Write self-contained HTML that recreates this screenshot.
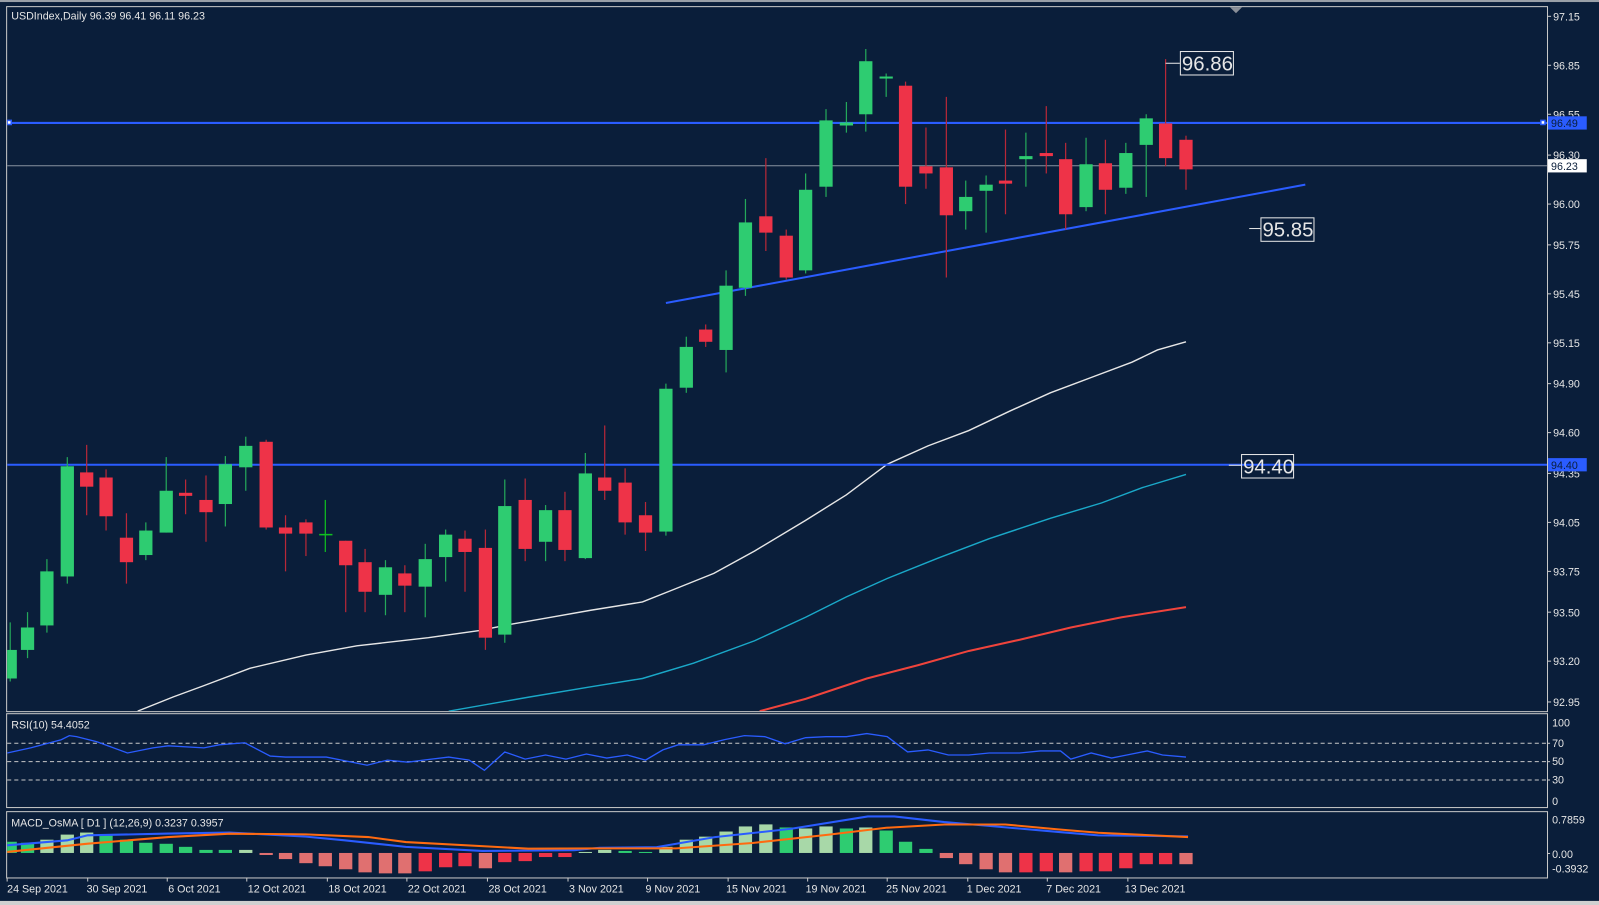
<!DOCTYPE html>
<html><head><meta charset="utf-8"><style>
html,body{margin:0;padding:0;background:#0a1e3a;overflow:hidden}
svg{display:block}
text{font-family:"Liberation Sans",sans-serif;fill:#e6e6e6}
</style></head><body>
<svg width="1599" height="905" viewBox="0 0 1568 887" preserveAspectRatio="none" xmlns="http://www.w3.org/2000/svg">
<defs>
<clipPath id="cm"><rect x="7" y="7" width="1510" height="690"/></clipPath>
<clipPath id="cr"><rect x="7" y="700" width="1510" height="91"/></clipPath>
<clipPath id="cd"><rect x="7" y="796" width="1510" height="64"/></clipPath>
</defs>
<rect x="0" y="0" width="1568" height="887" fill="#0a1e3a"/>
<rect x="0" y="883" width="1568" height="4" fill="#d0d0d0"/>
<rect x="0" y="0" width="1568" height="2" fill="#9aa0a8"/>
<rect x="6.5" y="6.5" width="1511" height="691" fill="none" stroke="#c8c8c8" stroke-width="1"/>
<rect x="6.5" y="699.5" width="1511" height="92" fill="none" stroke="#c8c8c8" stroke-width="1"/>
<rect x="6.5" y="795.5" width="1511" height="65" fill="none" stroke="#c8c8c8" stroke-width="1"/>
<polygon points="1206,7 1218,7 1212,13" fill="#8a8f98"/>

<g clip-path="url(#cm)">
<line x1="7" y1="162.5" x2="1517" y2="162.5" stroke="#8892a0" stroke-width="1"/>
<polyline fill="none" stroke="#e6e6e6" stroke-width="1.4" points="135,697 170,683 200,672 245,655 300,642 350,633 420,625 470,618 500,612 540,605 580,598 630,590 660,578 700,562 740,540 790,510 830,485 870,455 910,437 950,422 990,403 1030,385 1070,370 1110,355 1135,343 1163,335"/>
<polyline fill="none" stroke="#1aa8c8" stroke-width="1.4" points="440,697 520,683 580,673 630,665 680,650 740,628 790,605 830,585 870,567 920,547 970,528 1030,508 1080,493 1120,478 1163,465"/>
<polyline fill="none" stroke="#f0443c" stroke-width="2" points="745,697 790,685 850,665 900,652 950,638 1000,627 1050,615 1100,605 1163,595"/>
<line x1="7" y1="120.5" x2="1517" y2="120.5" stroke="#2a5cff" stroke-width="2"/>
<line x1="7" y1="455.5" x2="1517" y2="455.5" stroke="#2a5cff" stroke-width="2"/>
<rect x="7" y="118" width="4" height="4" fill="#fff" stroke="#2a5cff" stroke-width="1.5"/>
<rect x="1511" y="118" width="4" height="4" fill="#fff" stroke="#2a5cff" stroke-width="1.5"/>
<line x1="653" y1="297" x2="1280" y2="181" stroke="#2a5cff" stroke-width="2"/>
<g>
<g stroke="#24a85a" stroke-width="1.2">
<line x1="10" y1="610" x2="10" y2="668"/><line x1="27" y1="600" x2="27" y2="645"/><line x1="46" y1="548" x2="46" y2="620"/><line x1="66" y1="448" x2="66" y2="572"/><line x1="143" y1="512" x2="143" y2="549"/><line x1="163" y1="448" x2="163" y2="522"/><line x1="221" y1="447" x2="221" y2="516"/><line x1="241" y1="428" x2="241" y2="481"/><line x1="378" y1="549" x2="378" y2="603"/><line x1="417" y1="533" x2="417" y2="605"/><line x1="437" y1="519" x2="437" y2="570"/><line x1="495" y1="470" x2="495" y2="630"/><line x1="535" y1="495" x2="535" y2="550"/><line x1="574" y1="444" x2="574" y2="548"/><line x1="653" y1="376" x2="653" y2="525"/><line x1="673" y1="330" x2="673" y2="385"/><line x1="712" y1="265" x2="712" y2="365"/><line x1="731" y1="195" x2="731" y2="290"/><line x1="790" y1="170" x2="790" y2="268"/><line x1="810" y1="107" x2="810" y2="193"/><line x1="830" y1="100" x2="830" y2="130"/><line x1="849" y1="48" x2="849" y2="129"/><line x1="869" y1="72" x2="869" y2="95"/><line x1="947" y1="177" x2="947" y2="225"/><line x1="967" y1="172" x2="967" y2="228"/><line x1="1006" y1="130" x2="1006" y2="183"/><line x1="1065" y1="135" x2="1065" y2="207"/><line x1="1104" y1="140" x2="1104" y2="190"/><line x1="1124" y1="112" x2="1124" y2="193"/>
</g>
<line x1="319" y1="490" x2="319" y2="541" stroke="#10c020" stroke-width="1.2"/>
<line x1="313" y1="524" x2="326" y2="524" stroke="#10c020" stroke-width="1.5"/>
<g stroke="#b82838" stroke-width="1.2">
<line x1="85" y1="436" x2="85" y2="505"/><line x1="104" y1="460" x2="104" y2="520"/><line x1="124" y1="503" x2="124" y2="572"/><line x1="182" y1="470" x2="182" y2="504"/><line x1="202" y1="466" x2="202" y2="531"/><line x1="261" y1="431" x2="261" y2="519"/><line x1="280" y1="505" x2="280" y2="560"/><line x1="300" y1="509" x2="300" y2="545"/><line x1="339" y1="530" x2="339" y2="600"/><line x1="358" y1="538" x2="358" y2="600"/><line x1="397" y1="554" x2="397" y2="600"/><line x1="456" y1="520" x2="456" y2="580"/><line x1="476" y1="519" x2="476" y2="637"/><line x1="515" y1="469" x2="515" y2="550"/><line x1="554" y1="482" x2="554" y2="550"/><line x1="593" y1="417" x2="593" y2="490"/><line x1="613" y1="459" x2="613" y2="524"/><line x1="633" y1="492" x2="633" y2="540"/><line x1="692" y1="318" x2="692" y2="340"/><line x1="751" y1="155" x2="751" y2="246"/><line x1="771" y1="225" x2="771" y2="274"/><line x1="888" y1="80" x2="888" y2="200"/><line x1="908" y1="125" x2="908" y2="185"/><line x1="928" y1="95" x2="928" y2="272"/><line x1="986" y1="127" x2="986" y2="210"/><line x1="1026" y1="104" x2="1026" y2="170"/><line x1="1045" y1="140" x2="1045" y2="225"/><line x1="1084" y1="137" x2="1084" y2="210"/><line x1="1143" y1="58" x2="1143" y2="163"/><line x1="1163" y1="133" x2="1163" y2="186"/>
</g>
<g fill="#2ecc71">
<rect x="3.5" y="637" width="13" height="28"/><rect x="20.5" y="615" width="13" height="22"/><rect x="39.5" y="560" width="13" height="53"/><rect x="59.5" y="457" width="13" height="108"/><rect x="136.5" y="520" width="13" height="24"/><rect x="156.5" y="481" width="13" height="41"/><rect x="214.5" y="455" width="13" height="39"/><rect x="234.5" y="437" width="13" height="21"/><rect x="371.5" y="556" width="13" height="27"/><rect x="410.5" y="548" width="13" height="27"/><rect x="430.5" y="524" width="13" height="22"/><rect x="488.5" y="496" width="13" height="126"/><rect x="528.5" y="500" width="13" height="31"/><rect x="567.5" y="464" width="13" height="83"/><rect x="646.5" y="381" width="13" height="140"/><rect x="666.5" y="340" width="13" height="40"/><rect x="705.5" y="280" width="13" height="63"/><rect x="724.5" y="218" width="13" height="64"/><rect x="783.5" y="186" width="13" height="79"/><rect x="803.5" y="118" width="13" height="65"/><rect x="823.5" y="120" width="13" height="3"/><rect x="842.5" y="60" width="13" height="52"/><rect x="862.5" y="75" width="13" height="2"/><rect x="940.5" y="193" width="13" height="14"/><rect x="960.5" y="181" width="13" height="6"/><rect x="999.5" y="153" width="13" height="3"/><rect x="1058.5" y="161" width="13" height="42"/><rect x="1097.5" y="150" width="13" height="34"/><rect x="1117.5" y="116" width="13" height="26"/>
</g>
<g fill="#ee3348">
<rect x="78.5" y="463" width="13" height="14"/><rect x="97.5" y="468" width="13" height="38"/><rect x="117.5" y="527" width="13" height="24"/><rect x="175.5" y="483" width="13" height="3"/><rect x="195.5" y="490" width="13" height="12"/><rect x="254.5" y="433" width="13" height="84"/><rect x="273.5" y="517" width="13" height="6"/><rect x="293.5" y="512" width="13" height="11"/><rect x="332.5" y="530" width="13" height="24"/><rect x="351.5" y="551" width="13" height="29"/><rect x="390.5" y="562" width="13" height="12"/><rect x="449.5" y="528" width="13" height="13"/><rect x="469.5" y="537" width="13" height="88"/><rect x="508.5" y="490" width="13" height="48"/><rect x="547.5" y="500" width="13" height="39"/><rect x="586.5" y="468" width="13" height="13"/><rect x="606.5" y="473" width="13" height="39"/><rect x="626.5" y="505" width="13" height="17"/><rect x="685.5" y="323" width="13" height="12"/><rect x="744.5" y="212" width="13" height="16"/><rect x="764.5" y="231" width="13" height="41"/><rect x="881.5" y="84" width="13" height="99"/><rect x="901.5" y="163" width="13" height="7"/><rect x="921.5" y="164" width="13" height="47"/><rect x="979.5" y="177" width="13" height="3"/><rect x="1019.5" y="150" width="13" height="3"/><rect x="1038.5" y="156" width="13" height="54"/><rect x="1077.5" y="160" width="13" height="26"/><rect x="1136.5" y="121" width="13" height="34"/><rect x="1156.5" y="137" width="13" height="29"/>
</g>
</g>
</g>
<g stroke="#e8e8e8" stroke-width="1" fill="none">
<line x1="1143" y1="62" x2="1157" y2="62"/><rect x="1157.5" y="50.5" width="52" height="23"/>
<line x1="1225" y1="224" x2="1236" y2="224"/><rect x="1236.5" y="213.5" width="52" height="23"/>
<line x1="1205" y1="456" x2="1217" y2="456"/><rect x="1217.5" y="445.5" width="51" height="23"/>
</g>
<g font-size="20">
<text x="1159" y="69">96.86</text>
<text x="1238" y="232">95.85</text>
<text x="1219" y="464">94.40</text>
</g>
<text x="11" y="19" font-size="10.5">USDIndex,Daily  96.39 96.41 96.11 96.23</text>

<g stroke="#c8c8c8"><line x1="1517" y1="16" x2="1521" y2="16"/><line x1="1517" y1="64" x2="1521" y2="64"/><line x1="1517" y1="112" x2="1521" y2="112"/><line x1="1517" y1="152" x2="1521" y2="152"/><line x1="1517" y1="200" x2="1521" y2="200"/><line x1="1517" y1="240" x2="1521" y2="240"/><line x1="1517" y1="288" x2="1521" y2="288"/><line x1="1517" y1="336" x2="1521" y2="336"/><line x1="1517" y1="376" x2="1521" y2="376"/><line x1="1517" y1="424" x2="1521" y2="424"/><line x1="1517" y1="464" x2="1521" y2="464"/><line x1="1517" y1="512" x2="1521" y2="512"/><line x1="1517" y1="560" x2="1521" y2="560"/><line x1="1517" y1="600" x2="1521" y2="600"/><line x1="1517" y1="648" x2="1521" y2="648"/><line x1="1517" y1="688" x2="1521" y2="688"/></g>
<g font-size="10.5">
<text x="1523" y="20">97.15</text><text x="1523" y="68">96.85</text><text x="1523" y="116">96.55</text><text x="1523" y="156">96.30</text><text x="1523" y="204">96.00</text><text x="1523" y="244">95.75</text><text x="1523" y="292">95.45</text><text x="1523" y="340">95.15</text><text x="1523" y="380">94.90</text><text x="1523" y="428">94.60</text><text x="1523" y="468">94.35</text><text x="1523" y="516">94.05</text><text x="1523" y="564">93.75</text><text x="1523" y="604">93.50</text><text x="1523" y="652">93.20</text><text x="1523" y="692">92.95</text>
</g>
<rect x="1518" y="114" width="38" height="13" fill="#2a5cff"/>
<text x="1521" y="124.5" font-size="10.5" style="fill:#0a1e3a">96.49</text>
<rect x="1518" y="156" width="38" height="13" fill="#ffffff"/>
<text x="1521" y="166.5" font-size="10.5" style="fill:#0a1e3a">96.23</text>
<rect x="1518" y="449" width="38" height="13" fill="#2a5cff"/>
<text x="1521" y="459.5" font-size="10.5" style="fill:#0a1e3a">94.40</text>

<g stroke="#c8c8c8" stroke-dasharray="4,3" stroke-width="1">
<line x1="7" y1="728.5" x2="1517" y2="728.5"/><line x1="7" y1="746.5" x2="1517" y2="746.5"/><line x1="7" y1="764.5" x2="1517" y2="764.5"/>
</g>
<polyline clip-path="url(#cr)" fill="none" stroke="#2a5cff" stroke-width="1.3" points="7,738 30,733 60,725 68,721 75,722 95,727 125,738 150,733 165,731 200,733 215,730 240,728 265,741 280,742 320,742 340,746 360,750 380,745 400,747 415,745 440,742 460,745 475,755 495,737 515,744 535,740 555,744 575,739 595,743 615,740 633,745 650,735 665,730 690,730 710,725 730,721 750,722 770,729 790,723 810,722 830,722 850,719 870,722 890,737 910,735 930,740 950,740 970,738 1000,738 1020,736 1040,736 1050,744 1070,738 1090,743 1105,740 1125,736 1140,740 1163,742"/>
<text x="11" y="714" font-size="10.5">RSI(10) 54.4052</text>
<g font-size="10.5"><text x="1522" y="712">100</text><text x="1522" y="732">70</text><text x="1522" y="750">50</text><text x="1522" y="768">30</text><text x="1522" y="789">0</text></g>
<g stroke="#c8c8c8"><line x1="1517" y1="728.5" x2="1520" y2="728.5"/><line x1="1517" y1="746.5" x2="1520" y2="746.5"/><line x1="1517" y1="764.5" x2="1520" y2="764.5"/></g>

<g clip-path="url(#cd)">
<g>
<rect x="3.5" y="825" width="13" height="11" fill="#2ecc71"/>
<rect x="20.5" y="826" width="13" height="10" fill="#2ecc71"/>
<rect x="39.5" y="823" width="13" height="13" fill="#a8d8a8"/>
<rect x="59.5" y="818" width="13" height="18" fill="#a8d8a8"/>
<rect x="78.5" y="816" width="13" height="20" fill="#a8d8a8"/>
<rect x="97.5" y="819" width="13" height="17" fill="#2ecc71"/>
<rect x="117.5" y="823" width="13" height="13" fill="#2ecc71"/>
<rect x="136.5" y="826" width="13" height="10" fill="#2ecc71"/>
<rect x="156.5" y="827" width="13" height="9" fill="#2ecc71"/>
<rect x="175.5" y="830" width="13" height="6" fill="#2ecc71"/>
<rect x="195.5" y="833" width="13" height="3" fill="#2ecc71"/>
<rect x="214.5" y="833" width="13" height="3" fill="#2ecc71"/>
<rect x="234.5" y="833" width="13" height="3" fill="#a8d8a8"/>
<rect x="254.5" y="836" width="13" height="2" fill="#e07070"/>
<rect x="273.5" y="836" width="13" height="6" fill="#e07070"/>
<rect x="293.5" y="836" width="13" height="10" fill="#e07070"/>
<rect x="312.5" y="836" width="13" height="13" fill="#e07070"/>
<rect x="332.5" y="836" width="13" height="16" fill="#e07070"/>
<rect x="351.5" y="836" width="13" height="19" fill="#e07070"/>
<rect x="371.5" y="836" width="13" height="20" fill="#e07070"/>
<rect x="390.5" y="836" width="13" height="20" fill="#e07070"/>
<rect x="410.5" y="836" width="13" height="18" fill="#ee3348"/>
<rect x="430.5" y="836" width="13" height="14" fill="#ee3348"/>
<rect x="449.5" y="836" width="13" height="13" fill="#ee3348"/>
<rect x="469.5" y="836" width="13" height="15" fill="#e07070"/>
<rect x="488.5" y="836" width="13" height="9" fill="#ee3348"/>
<rect x="508.5" y="836" width="13" height="8" fill="#ee3348"/>
<rect x="528.5" y="836" width="13" height="4" fill="#ee3348"/>
<rect x="547.5" y="836" width="13" height="4" fill="#ee3348"/>
<rect x="567.5" y="835" width="13" height="1" fill="#a8d8a8"/>
<rect x="586.5" y="833" width="13" height="3" fill="#a8d8a8"/>
<rect x="606.5" y="834" width="13" height="2" fill="#2ecc71"/>
<rect x="626.5" y="835" width="13" height="1" fill="#2ecc71"/>
<rect x="646.5" y="830" width="13" height="6" fill="#a8d8a8"/>
<rect x="666.5" y="823" width="13" height="13" fill="#a8d8a8"/>
<rect x="685.5" y="820" width="13" height="16" fill="#a8d8a8"/>
<rect x="705.5" y="815" width="13" height="21" fill="#a8d8a8"/>
<rect x="724.5" y="810" width="13" height="26" fill="#a8d8a8"/>
<rect x="744.5" y="808" width="13" height="28" fill="#a8d8a8"/>
<rect x="764.5" y="811" width="13" height="25" fill="#2ecc71"/>
<rect x="783.5" y="812" width="13" height="24" fill="#a8d8a8"/>
<rect x="803.5" y="810" width="13" height="26" fill="#a8d8a8"/>
<rect x="823.5" y="812" width="13" height="24" fill="#2ecc71"/>
<rect x="842.5" y="811" width="13" height="25" fill="#a8d8a8"/>
<rect x="862.5" y="814" width="13" height="22" fill="#2ecc71"/>
<rect x="881.5" y="825" width="13" height="11" fill="#2ecc71"/>
<rect x="901.5" y="832" width="13" height="4" fill="#2ecc71"/>
<rect x="921.5" y="836" width="13" height="5" fill="#e07070"/>
<rect x="940.5" y="836" width="13" height="11" fill="#e07070"/>
<rect x="960.5" y="836" width="13" height="16" fill="#e07070"/>
<rect x="979.5" y="836" width="13" height="19" fill="#e07070"/>
<rect x="999.5" y="836" width="13" height="19" fill="#ee3348"/>
<rect x="1019.5" y="836" width="13" height="18" fill="#ee3348"/>
<rect x="1038.5" y="836" width="13" height="19" fill="#e07070"/>
<rect x="1058.5" y="836" width="13" height="18" fill="#ee3348"/>
<rect x="1077.5" y="836" width="13" height="18" fill="#ee3348"/>
<rect x="1097.5" y="836" width="13" height="15" fill="#ee3348"/>
<rect x="1117.5" y="836" width="13" height="11" fill="#ee3348"/>
<rect x="1136.5" y="836" width="13" height="11" fill="#ee3348"/>
<rect x="1156.5" y="836" width="13" height="11" fill="#e07070"/>
</g>
<polyline fill="none" stroke="#2a5cff" stroke-width="2" points="7,828.5 66,823.6 86,818.7 165,817 225,816 300,820 338,823.6 398,830 473,834 563,833.3 588,830.9 644,830.3 701,820.5 776,812.3 851,800.2 877,800.2 926,805.7 964,809 1039,815.5 1077,818.8 1165,819.7"/>
<polyline fill="none" stroke="#ff6a10" stroke-width="2" points="7,835 86,826.9 165,820.4 225,817.1 300,817.8 361,820.4 398,825.3 477,829.5 518,831.8 588,831.5 663,831.5 738,826.2 813,818 869,811.3 926,808.1 986,808.1 1039,813 1077,816.2 1165,820.4"/>
</g>
<text x="11" y="810" font-size="10.5">MACD_OsMA [ D1 ] (12,26,9)  0.3237 0.3957</text>
<g font-size="10.5"><text x="1522" y="807">0.7859</text><text x="1522" y="841">0.00</text><text x="1522" y="855">-0.3932</text></g>
<line x1="1517" y1="836.5" x2="1520" y2="836.5" stroke="#c8c8c8"/>

<g stroke="#c8c8c8"><line x1="7" y1="860" x2="7" y2="864"/><line x1="86" y1="860" x2="86" y2="864"/><line x1="164" y1="860" x2="164" y2="864"/><line x1="242" y1="860" x2="242" y2="864"/><line x1="321" y1="860" x2="321" y2="864"/><line x1="399" y1="860" x2="399" y2="864"/><line x1="478" y1="860" x2="478" y2="864"/><line x1="557" y1="860" x2="557" y2="864"/><line x1="635" y1="860" x2="635" y2="864"/><line x1="714" y1="860" x2="714" y2="864"/><line x1="792" y1="860" x2="792" y2="864"/><line x1="870" y1="860" x2="870" y2="864"/><line x1="949" y1="860" x2="949" y2="864"/><line x1="1027" y1="860" x2="1027" y2="864"/><line x1="1106" y1="860" x2="1106" y2="864"/></g>
<g font-size="10.5">
<text x="7" y="875">24 Sep 2021</text><text x="85" y="875">30 Sep 2021</text><text x="165" y="875">6 Oct 2021</text><text x="243" y="875">12 Oct 2021</text><text x="322" y="875">18 Oct 2021</text><text x="400" y="875">22 Oct 2021</text><text x="479" y="875">28 Oct 2021</text><text x="558" y="875">3 Nov 2021</text><text x="633" y="875">9 Nov 2021</text><text x="712" y="875">15 Nov 2021</text><text x="790" y="875">19 Nov 2021</text><text x="869" y="875">25 Nov 2021</text><text x="948" y="875">1 Dec 2021</text><text x="1026" y="875">7 Dec 2021</text><text x="1103" y="875">13 Dec 2021</text>
</g>
</svg>
</body></html>
